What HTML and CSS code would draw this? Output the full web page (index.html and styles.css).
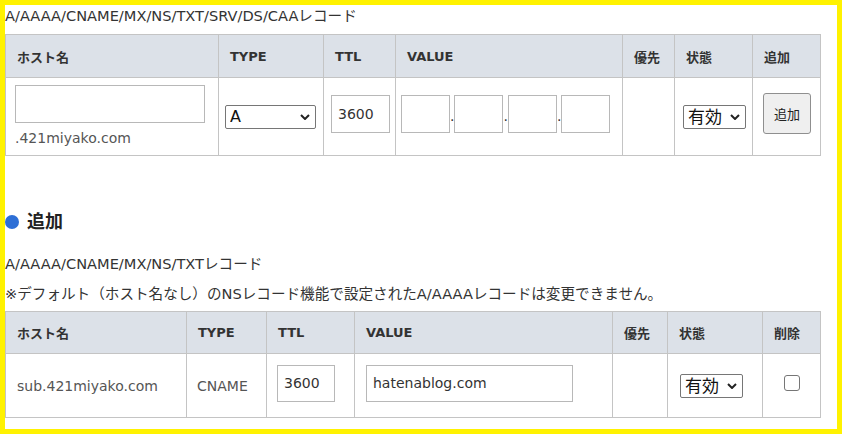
FILE: index.html
```html
<!DOCTYPE html>
<html lang="ja">
<head>
<meta charset="utf-8">
<title>DNSレコード設定</title>
<link rel="stylesheet" href="styles.css">
</head>
<body>
<div class="frame">
  <p class="caption">A/AAAA/CNAME/MX/NS/TXT/SRV/DS/CAAレコード</p>
  <table class="grid grid-add">
    <colgroup>
      <col class="w213"><col class="w105"><col class="w72"><col class="w227"><col class="w52"><col class="w78"><col class="w68">
    </colgroup>
    <thead>
      <tr><th>ホスト名</th><th>TYPE</th><th>TTL</th><th>VALUE</th><th>優先</th><th>状態</th><th>追加</th></tr>
    </thead>
    <tbody>
      <tr>
        <td class="host-cell">
          <input class="field host-input" type="text">
          <div class="domain">.421miyako.com</div>
        </td>
        <td class="type-cell">
          <span class="select-wrap">
            <select class="pick pick-type"><option>A</option></select>
            <svg class="chev" width="10" height="6" viewBox="0 0 10 6"><polyline points="1,1 5,5 9,1" fill="none" stroke="#222" stroke-width="2"/></svg>
          </span>
        </td>
        <td class="ttl-cell"><input class="field ttl lift" type="text" value="3600"></td>
        <td class="value-cell"><input class="field oct lift" type="text">.<input class="field oct lift" type="text">.<input class="field oct lift" type="text">.<input class="field oct lift" type="text"></td>
        <td></td>
        <td class="state-cell">
          <span class="select-wrap">
            <select class="pick pick-state"><option>有効</option></select>
            <svg class="chev" width="10" height="6" viewBox="0 0 10 6"><polyline points="1,1 5,5 9,1" fill="none" stroke="#222" stroke-width="2"/></svg>
          </span>
        </td>
        <td class="btn-cell"><button class="add-btn lift" type="button">追加</button></td>
      </tr>
    </tbody>
  </table>

  <h2 class="section-title"><span class="dot"></span>追加</h2>
  <p class="note note-first">A/AAAA/CNAME/MX/NS/TXTレコード</p>
  <p class="note">※デフォルト（ホスト名なし）のNSレコード機能で設定されたA/AAAAレコードは変更できません。</p>

  <table class="grid grid-list">
    <colgroup>
      <col class="w181"><col class="w80"><col class="w88"><col class="w258"><col class="w55"><col class="w95"><col class="w58">
    </colgroup>
    <thead>
      <tr><th>ホスト名</th><th>TYPE</th><th>TTL</th><th>VALUE</th><th>優先</th><th>状態</th><th>削除</th></tr>
    </thead>
    <tbody>
      <tr>
        <td class="plain">sub.421miyako.com</td>
        <td class="plain">CNAME</td>
        <td><input class="field ttl2 lift2" type="text" value="3600"></td>
        <td><input class="field val2 lift2" type="text" value="hatenablog.com"></td>
        <td></td>
        <td>
          <span class="select-wrap">
            <select class="pick pick-state"><option>有効</option></select>
            <svg class="chev" width="10" height="6" viewBox="0 0 10 6"><polyline points="1,1 5,5 9,1" fill="none" stroke="#222" stroke-width="2"/></svg>
          </span>
        </td>
        <td class="check-cell"><input class="check" type="checkbox"></td>
      </tr>
    </tbody>
  </table>
</div>
</body>
</html>
```

FILE: styles.css
```css
* { box-sizing: border-box; }
html, body { margin: 0; padding: 0; background: #ffffff; }
body {
  font-family: "DejaVu Sans", "Noto Sans CJK JP", sans-serif;
  font-size: 14px;
  color: #333333;
}
.frame {
  width: 842px;
  height: 434px;
  border: 5px solid #fff200;
  background: #ffffff;
}
.caption {
  margin: 0;
  line-height: 22px;
  font-size: 14.6px;
  color: #333333;
}

/* tables */
.grid {
  border-collapse: collapse;
  table-layout: fixed;
  width: 815px;
}
.grid-add { margin-top: 7px; }
.grid-list { margin-top: 2px; }
.w213 { width: 213px; } .w105 { width: 105px; } .w72 { width: 72px; } .w227 { width: 227px; }
.w52 { width: 52px; } .w78 { width: 78px; } .w68 { width: 68px; }
.w181 { width: 181px; } .w80 { width: 80px; } .w88 { width: 88px; } .w258 { width: 258px; }
.w55 { width: 55px; } .w95 { width: 95px; } .w58 { width: 58px; }

.grid th, .grid td {
  border: 1px solid #c4c4c4;
  text-align: left;
  vertical-align: middle;
  padding: 0 0 0 11px;
}
.grid th {
  background: #dce1e8;
  font-size: 13px;
  font-weight: bold;
  color: #333333;
}
.grid-add th { height: 43px; }
.grid-add td { height: 78px; }
.grid-list th { height: 42px; }
.grid-list td { height: 64px; }

.grid-add .host-cell { padding-left: 9px; }
.grid-add .type-cell { padding-left: 6px; }
.grid-add .ttl-cell { padding-left: 7px; }
.grid-add .value-cell { padding-left: 5px; white-space: nowrap; }
.grid-add .state-cell { padding-left: 8px; }
.grid-add .btn-cell { padding-left: 10px; }
.grid-list td { padding-left: 10px; }
.grid-list td.plain { color: #555555; }
.grid-list td:first-child { padding-left: 11px; }
.grid-list td:nth-child(4) { padding-left: 11px; }
.grid-list td:nth-child(6) { padding-left: 12px; }
.grid-list .check-cell { padding-left: 0; text-align: center; }

/* inputs */
.field {
  display: inline-block;
  vertical-align: middle;
  height: 38px;
  border: 1px solid #b8b8b8;
  border-radius: 0;
  background: #ffffff;
  font-family: "DejaVu Sans", "Noto Sans CJK JP", sans-serif;
  font-size: 14px;
  color: #333333;
  padding: 0 6px;
  margin: 0;
  outline: none;
}
.host-input { width: 190px; display: block; }
.domain {
  margin-top: 5px;
  line-height: 20px;
  color: #555555;
}
.ttl { width: 59px; }
.oct { width: 49px; }
.ttl2 { width: 58px; height: 37px; }
.val2 { width: 207px; height: 37px; }
.lift { margin-bottom: 6px; }
.lift2 { margin-bottom: 5px; }

/* selects */
.select-wrap {
  position: relative;
  display: inline-block;
  vertical-align: middle;
}
.pick {
  -webkit-appearance: none;
  appearance: none;
  display: block;
  height: 24px;
  border: 1px solid #767676;
  border-radius: 2px;
  background: #ffffff;
  color: #111111;
  font-family: "DejaVu Sans", "Noto Sans CJK JP", sans-serif;
  font-size: 16px;
  line-height: 22px;
  padding: 0 0 0 4px;
  margin: 0;
}
.pick-type { width: 91px; }
.pick-state { width: 63px; font-size: 17px; }
.chev {
  position: absolute;
  right: 6px;
  top: 9px;
  pointer-events: none;
}

/* button */
.add-btn {
  width: 48px;
  height: 41px;
  background: #efefef;
  border: 1px solid #8f8f8f;
  border-radius: 3px;
  font-family: "Noto Sans CJK JP", sans-serif;
  font-size: 13px;
  color: #222222;
  padding: 0;
  vertical-align: middle;
}

/* checkbox */
.check {
  -webkit-appearance: none;
  appearance: none;
  width: 16px;
  height: 16px;
  border: 1px solid #767676;
  border-radius: 3px;
  background: #ffffff;
  margin: 0 0 6px 0;
  vertical-align: middle;
}

/* section */
.section-title {
  margin: 55px 0 0 0;
  display: flex;
  align-items: center;
  gap: 8px;
  font-size: 18px;
  font-weight: bold;
  line-height: 22px;
  color: #222222;
}
.dot {
  width: 14px;
  height: 14px;
  border-radius: 50%;
  background: #2e6fd6;
  flex: none;
}
.note {
  margin: 0;
  line-height: 30px;
  font-size: 14.6px;
  color: #333333;
}
.note-first { margin-top: 16px; }
```
